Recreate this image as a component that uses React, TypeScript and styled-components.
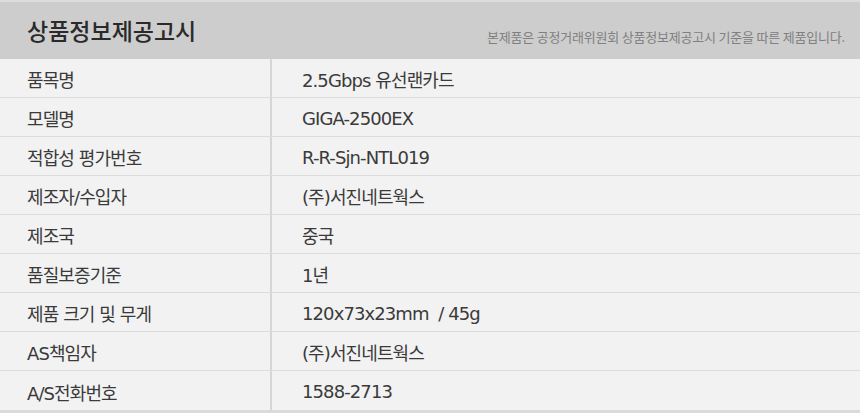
import styled, { createGlobalStyle } from 'styled-components'

const GlobalStyle = createGlobalStyle`
  html, body {
    margin: 0;
    padding: 0;
    background: #f2f2f2;
  }
  body {
    font-family: 'Noto Sans CJK KR', 'Noto Sans', sans-serif;
    color: #333;
  }
`

interface IRow {
  label: string
  value: string
}

const rows: IRow[] = [
  { label: '품목명', value: '2.5Gbps 유선랜카드' },
  { label: '모델명', value: 'GIGA-2500EX' },
  { label: '적합성 평가번호', value: 'R-R-Sjn-NTL019' },
  { label: '제조자/수입자', value: '(주)서진네트웍스' },
  { label: '제조국', value: '중국' },
  { label: '품질보증기준', value: '1년' },
  { label: '제품 크기 및 무게', value: '120x73x23mm  / 45g' },
  { label: 'AS책임자', value: '(주)서진네트웍스' },
  { label: 'A/S전화번호', value: '1588-2713' },
]

const App = () => {
  return (
    <>
      <GlobalStyle />
      <NoticeWrapper>
        <NoticeHeader>
          <h2 className="title">상품정보제공고시</h2>
          <span className="desc">본제품은 공정거래위원회 상품정보제공고시 기준을 따른 제품입니다.</span>
        </NoticeHeader>
        <InfoTable>
          {rows.map((item) => (
            <InfoRow key={item.label}>
              <div className="label">{item.label}</div>
              <div className="value">{item.value}</div>
            </InfoRow>
          ))}
        </InfoTable>
      </NoticeWrapper>
    </>
  )
}
export default App

const NoticeWrapper = styled.div`
  width: 860px;
  height: 413px;
  overflow: hidden;
  background: #f2f2f2;
`

const NoticeHeader = styled.div`
  height: 57px;
  border-top: 2px solid #dcdcdc;
  background: #cdcdcd;
  box-sizing: content-box;
  display: flex;
  justify-content: space-between;
  align-items: center;
  padding: 0 15px 0 27px;

  .title {
    margin: 0;
    font-size: 23px;
    font-weight: 500;
    color: #2a2a2a;
    position: relative;
    top: -1px;
  }

  .desc {
    font-size: 13px;
    color: #808080;
    letter-spacing: -0.2px;
    position: relative;
    top: 6px;
  }
`

const InfoTable = styled.div`
  display: flex;
  flex-direction: column;
  border-bottom: 3px solid #dadada;
`

const InfoRow = styled.div`
  display: grid;
  grid-template-columns: 272px 1fr;
  height: 38px;
  border-bottom: 1px solid #dcdcdc;

  &:last-child {
    border-bottom: none;
    height: 39px;
  }

  .label,
  .value {
    display: flex;
    align-items: center;
    font-family: 'DejaVu Sans', 'Noto Sans CJK KR', sans-serif;
    font-size: 18px;
    letter-spacing: -0.9px;
    color: #3a3a3a;
    white-space: pre;
    padding-top: 2px;
  }

  .label {
    padding-left: 27px;
    border-right: 2px solid #d6d6d6;
  }

  .value {
    padding-left: 30px;
  }
`
